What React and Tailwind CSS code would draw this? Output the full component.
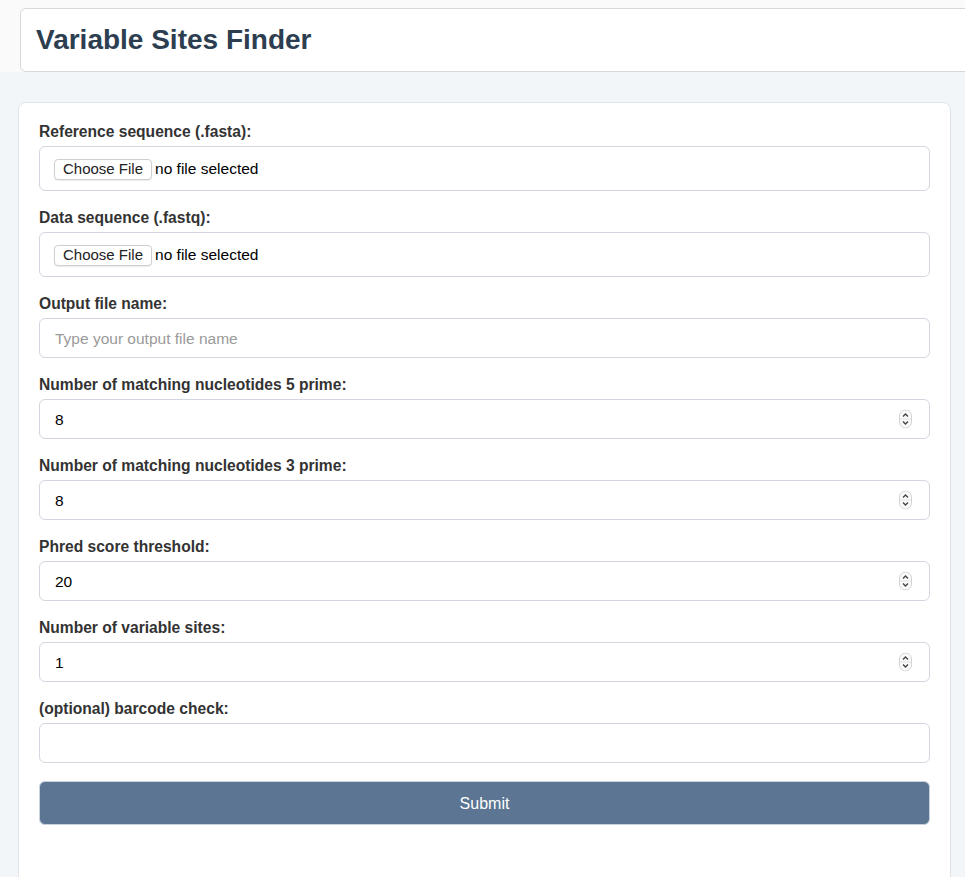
import React from 'react';

const Spinner = () => (
  <svg className="absolute right-[17px] top-1/2 -translate-y-1/2" width="13" height="19" viewBox="0 0 13 19">
    <rect x="0.5" y="0.5" width="12" height="18" rx="6" fill="#fafafa" stroke="#d4d4d4" />
    <line x1="1" y1="9.5" x2="12" y2="9.5" stroke="#e2e2e2" />
    <path d="M4 7 L6.5 4.5 L9 7" fill="none" stroke="#444" strokeWidth="1.4" />
    <path d="M4 12 L6.5 14.5 L9 12" fill="none" stroke="#444" strokeWidth="1.4" />
  </svg>
);

const Label = ({ children }) => (
  <label className="block text-[15.6px] leading-[18px] font-bold text-[#333] mb-[5px]">{children}</label>
);

const FileField = ({ label }) => (
  <div className="mb-[18px]">
    <Label>{label}</Label>
    <div className="h-[45px] border border-[#d3d6de] rounded-[6px] flex items-center pl-[14px] pt-[1px] text-[15.5px] text-black">
      <span className="h-[21px] px-[8px] flex items-center border border-[#cfcfcf] rounded-[4px] bg-white shadow-[0_1px_1px_rgba(0,0,0,0.08)] text-[#222] text-[15px]">
        Choose File
      </span>
      <span className="ml-[3px]">no file selected</span>
    </div>
  </div>
);

const TextField = ({ label, placeholder, value, number }) => (
  <div className="mb-[18px]">
    <Label>{label}</Label>
    <div className="relative h-[40px] border border-[#d3d6de] rounded-[6px] flex items-center px-[15px] pt-[2px] text-[15.5px]">
      {value ? (
        <span className="text-black">{value}</span>
      ) : (
        <span className="text-[#9a9a9a]">{placeholder}</span>
      )}
      {number && <Spinner />}
    </div>
  </div>
);

export default function App() {
  return (
    <div className="min-h-screen overflow-hidden bg-[#f3f6f9] font-['Liberation_Sans',Arial,sans-serif]">
      <div className="bg-[#fafafa] pl-[20px] pt-[8px]">
        <div className="-mr-[20px] h-[64px] bg-white border border-[#d8d8d8] rounded-[6px] flex items-center pl-[15px]">
          <h1 className="text-[28px] font-bold text-[#2c3e50]">Variable Sites Finder</h1>
        </div>
      </div>
      <div className="pt-[30px] pl-[18px] pr-[14px]">
        <div className="bg-white border border-[#e0e4e9] rounded-[8px] px-[20px] pt-[20px] pb-[60px]">
          <FileField label="Reference sequence (.fasta):" />
          <FileField label="Data sequence (.fastq):" />
          <TextField label="Output file name:" placeholder="Type your output file name" />
          <TextField label="Number of matching nucleotides 5 prime:" value="8" number />
          <TextField label="Number of matching nucleotides 3 prime:" value="8" number />
          <TextField label="Phred score threshold:" value="20" number />
          <TextField label="Number of variable sites:" value="1" number />
          <TextField label="(optional) barcode check:" />
          <button className="w-full h-[44px] pt-[2px] bg-[#5b7593] text-white text-[16px] rounded-[6px] border border-[#c9d2dc]">
            Submit
          </button>
        </div>
      </div>
    </div>
  );
}
